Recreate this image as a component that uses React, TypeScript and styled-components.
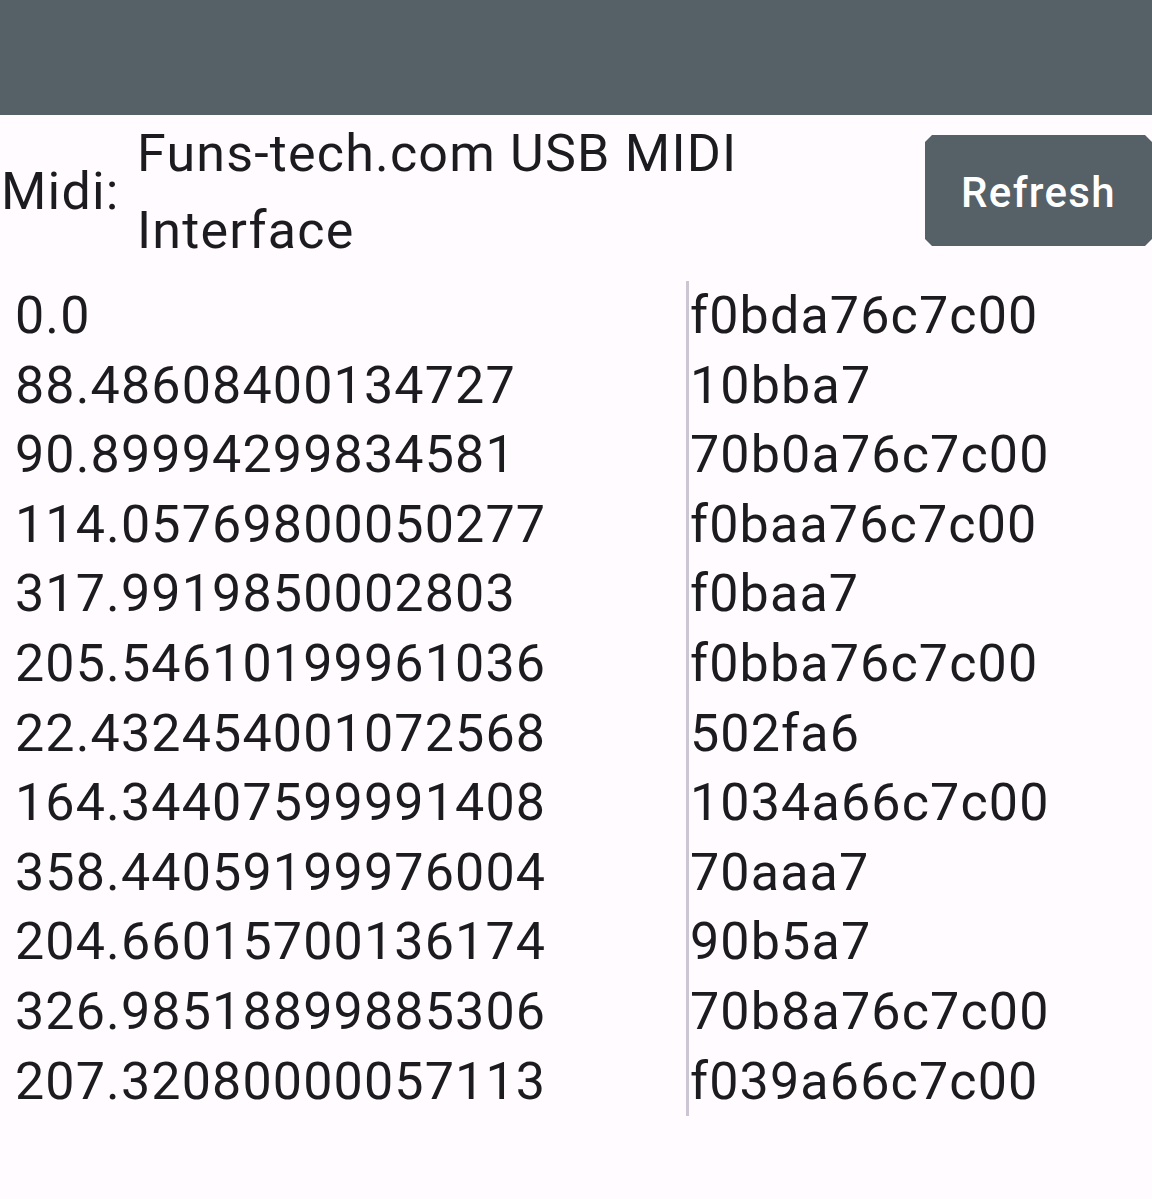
import React from "react";
import styled, { createGlobalStyle } from "styled-components";

const Global = createGlobalStyle`
  html, body { margin: 0; padding: 0; background: #fffbfe; }
  body { font-family: Roboto, "Noto Sans", sans-serif; color: #1c1b1f; }
`;

const Page = styled.div`
  width: 1152px;
  min-height: 1199px;
  background: #fffbfe;
  overflow: hidden;
`;

const TopBar = styled.div`
  height: 115px;
  background: #566067;
`;

const Header = styled.div`
  display: flex;
  align-items: flex-start;
`;

const MidiLabel = styled.div`
  font-size: 52px;
  line-height: 154px;
  letter-spacing: 1.2px;
  padding-left: 1px;
  width: 136px;
  flex-shrink: 0;
`;

const DeviceName = styled.div`
  font-size: 52px;
  line-height: 77px;
  letter-spacing: 1.2px;
  width: 788px;
  flex-shrink: 0;
`;

const RefreshButton = styled.button`
  margin-top: 20px;
  height: 111px;
  width: 227px;
  flex-shrink: 0;
  border: none;
  background: #566067;
  color: #ffffff;
  font-family: Roboto, sans-serif;
  font-weight: 500;
  font-size: 42px;
  letter-spacing: 1.3px;
  padding: 4px 0 0 0;
  clip-path: polygon(7px 0, calc(100% - 7px) 0, 100% 7px, 100% calc(100% - 7px), calc(100% - 7px) 100%, 7px 100%, 0 calc(100% - 7px), 0 7px);
`;

const List = styled.div`
  display: grid;
  grid-template-columns: 686px 1fr;
  margin-top: 12px;
`;

const Column = styled.div<{ $divider?: boolean }>`
  padding-left: ${(p) => (p.$divider ? "1px" : "15px")};
  border-left: ${(p) => (p.$divider ? "3px solid #cbc6d3" : "none")};
`;

const Cell = styled.div`
  font-size: 52px;
  line-height: 69.6px;
  letter-spacing: 1.15px;
  white-space: nowrap;
`;

const times = [
  "0.0",
  "88.48608400134727",
  "90.89994299834581",
  "114.05769800050277",
  "317.9919850002803",
  "205.54610199961036",
  "22.432454001072568",
  "164.34407599991408",
  "358.44059199976004",
  "204.66015700136174",
  "326.98518899885306",
  "207.32080000057113",
];

const codes = [
  "f0bda76c7c00",
  "10bba7",
  "70b0a76c7c00",
  "f0baa76c7c00",
  "f0baa7",
  "f0bba76c7c00",
  "502fa6",
  "1034a66c7c00",
  "70aaa7",
  "90b5a7",
  "70b8a76c7c00",
  "f039a66c7c00",
];

export default function App() {
  return (
    <Page>
      <Global />
      <TopBar />
      <Header>
        <MidiLabel>Midi:</MidiLabel>
        <DeviceName>
          Funs-tech.com USB MIDI
          <br />
          Interface
        </DeviceName>
        <RefreshButton>Refresh</RefreshButton>
      </Header>
      <List>
        <Column>
          {times.map((t) => (
            <Cell key={t}>{t}</Cell>
          ))}
        </Column>
        <Column $divider>
          {codes.map((c, i) => (
            <Cell key={i}>{c}</Cell>
          ))}
        </Column>
      </List>
    </Page>
  );
}
